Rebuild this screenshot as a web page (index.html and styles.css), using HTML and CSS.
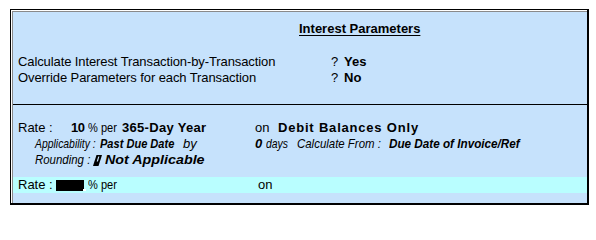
FILE: index.html
```html
<!DOCTYPE html>
<html>
<head>
<meta charset="utf-8">
<link rel="stylesheet" href="styles.css">
</head>
<body>
<div class="frame">
  <div class="panel">
    <section class="top">
      <div class="title-row"><span class="title">Interest Parameters</span></div>
      <div class="rows">
        <div class="row"><span class="w-q">Calculate Interest Transaction-by-Transaction</span><span class="q">?</span><b>Yes</b></div>
        <div class="row"><span class="w-q">Override Parameters for each Transaction</span><span class="q">?</span><b>No</b></div>
      </div>
    </section>
    <section class="bottom">
      <div class="row">
        <span class="w-rate">Rate :</span>
        <b class="w-num">10</b>
        <span class="w-per sx85">% per</span>
        <b class="w-year">365-Day Year</b>
        <span class="w-on">on</span>
        <b class="wide">Debit Balances Only</b>
      </div>
      <div class="row sub">
        <span class="w-app sx80">Applicability :</span>
        <b class="w-pdd sx85">Past Due Date</b>
        <span class="w-by">by</span>
        <b class="w-zero">0</b>
        <span class="w-days sx80">days</span>
        <span class="w-cf sx88">Calculate From :</span>
        <b class="w-val sx90">Due Date of Invoice/Ref</b>
      </div>
      <div class="row sub">
        <span class="w-rnd sx88">Rounding :</span>
        <span class="w-glyph"><svg class="glyph" width="9" height="11" viewBox="0 0 9 11"><polygon points="3.5,0 9,0 5.5,11 0,11" fill="#000"/><polygon points="5.2,1.5 6.4,1.5 4.9,6.5 3.7,6.5" fill="#c6e2fc"/></svg></span>
        <b class="w-na sx110">Not Applicable</b>
      </div>
      <div class="row edit">
        <span class="w-rate2">Rate :</span>
        <span class="field"></span>
        <span class="w-per2 sx85">% per</span>
        <span>on</span>
      </div>
    </section>
  </div>
</div>
</body>
</html>
```

FILE: styles.css
```css
html, body {
  margin: 0;
  padding: 0;
  background: #ffffff;
}

body {
  font-family: "Liberation Sans", Arial, sans-serif;
  font-size: 13px;
  line-height: 16px;
  color: #000000;
}

.frame {
  margin: 9px 0 0 10px;
  width: 579px;
  height: 196px;
  box-sizing: border-box;
  border: 1px solid #000000;
  border-right-width: 2px;
  border-bottom-width: 2px;
  padding: 1px 0 0 1px;
  background: #ffffff;
}

.panel {
  height: 100%;
  box-sizing: border-box;
  background: #c6e2fc;
  border-top: 1px solid #8a8a8a;
  border-left: 1px solid #8a8a8a;
  display: flex;
  flex-direction: column;
}

.top {
  height: 93px;
  box-sizing: border-box;
  border-bottom: 1px solid #000000;
  padding: 9px 0 0 5px;
  flex: none;
}

.title-row {
  padding-left: 281px;
  height: 16px;
}

.title {
  font-weight: bold;
  text-decoration: underline;
  text-underline-offset: 2px;
}

.rows {
  margin-top: 17px;
}

.row {
  display: flex;
  align-items: flex-start;
  white-space: nowrap;
  height: 16px;
}

.row > * {
  flex: none;
  transform-origin: 0 50%;
}

.row b {
  font-weight: bold;
}

.w-q { width: 313px; letter-spacing: -0.1px; }
.q { width: 13px; }

.bottom {
  flex: 1;
  padding: 15px 0 0 0;
}

.bottom > .row {
  padding-left: 5px;
}

.sx80 { transform: scaleX(0.8); }
.sx85 { transform: scaleX(0.85); }
.sx88 { transform: scaleX(0.88); }
.sx90 { transform: scaleX(0.9); }
.sx110 { transform: scaleX(1.1); }

.w-rate { width: 53px; }
.w-num { width: 17px; letter-spacing: -0.5px; }
.w-per { width: 34px; }
.w-year { width: 133px; letter-spacing: 0.3px; }
.w-on { width: 23px; }
.wide { letter-spacing: 0.8px; }

.sub {
  font-style: italic;
}

.bottom > .row.sub {
  padding-left: 22px;
}

.w-app { width: 65px; }
.w-pdd { width: 83px; }
.w-by { width: 72px; }
.w-zero { width: 11px; }
.w-days { width: 31px; }
.w-cf { width: 92px; }
.w-val { width: 150px; }

.w-rnd { width: 58px; }
.w-glyph { width: 12px; padding-top: 3px; height: 13px; }
.glyph { display: block; }
.w-na { width: 110px; }

.edit {
  margin-top: 9px;
  background: #b9feff;
}

.w-rate2 { width: 38px; }

.field {
  position: relative;
  width: 28px;
  height: 11px;
  margin-top: 3px;
  margin-right: 4px;
  background: #000000;
}

.field::after {
  content: "";
  position: absolute;
  right: -2px;
  bottom: 0;
  width: 3px;
  height: 2px;
  background: #ffffff;
}

.w-per2 { width: 170px; }
```
